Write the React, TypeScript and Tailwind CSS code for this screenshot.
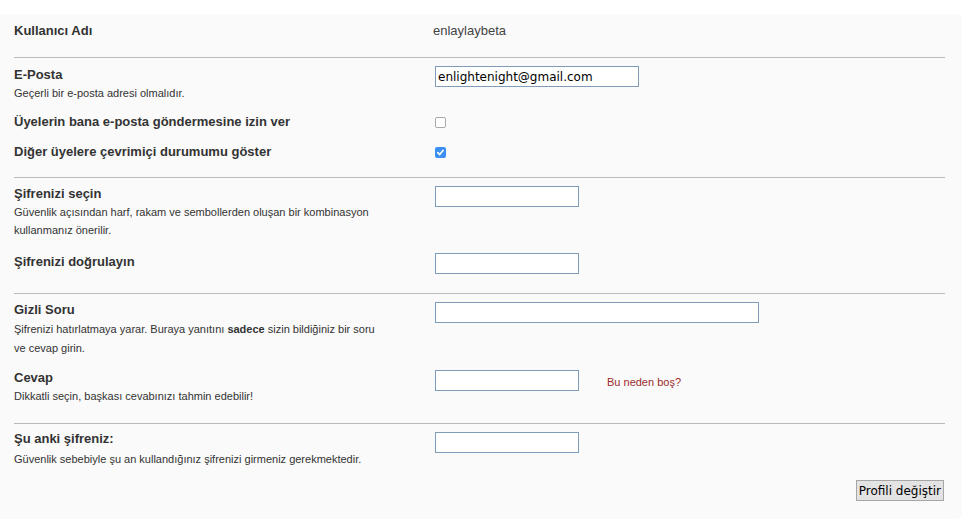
import React from "react";

const labelCls = "pt-[1px] font-['Liberation_Sans',Arial,sans-serif] text-[13px] leading-[18px] font-bold text-[#333]";
const descCls = "font-['Liberation_Sans',Arial,sans-serif] text-[11px] leading-[18px] text-[#333] max-w-[365px]";
const inputCls =
  "h-[21px] border border-[#7f9db9] bg-white px-[2px] font-['DejaVu_Sans',Verdana,sans-serif] text-[12px] text-black outline-none";

function Rule({ mt }: { mt: string }) {
  return <div className={`${mt} h-px bg-[#bbbbbb]`} />;
}

function CheckBox({ checked }: { checked: boolean }) {
  return checked ? (
    <span className="mt-[5px] flex size-[11px] items-center justify-center rounded-[2px] bg-[#3b8ff5]">
      <svg viewBox="0 0 10 10" className="size-[9px]" fill="none" stroke="white" strokeWidth="1.8">
        <path d="M2 5.2 4.1 7.3 8 2.6" strokeLinecap="round" strokeLinejoin="round" />
      </svg>
    </span>
  ) : (
    <span className="mt-[5px] block size-[11px] rounded-[2px] border border-[#a9a9a9] bg-white" />
  );
}

export default function App() {
  return (
    <div className="min-h-screen bg-white pt-[14px]">
      <div className="h-[505px] w-[962px] rounded-r-[6px] bg-[#fafafa] pl-[14px] pr-[17px] pt-[7px]">
        {/* username */}
        <div className="flex">
          <div className={`w-[419px] ${labelCls}`}>Kullanıcı Adı</div>
          <div className="pt-[1px] font-['Liberation_Sans',Arial,sans-serif] text-[13px] leading-[18px] text-[#444]">enlaylaybeta</div>
        </div>

        <Rule mt="mt-[17px]" />

        <div className="mt-[7px] flex">
          <div className="w-[421px]">
            <div className={labelCls}>E-Posta</div>
            <div className={descCls}>Geçerli bir e-posta adresi olmalıdır.</div>
          </div>
          <input className={`mt-[1px] w-[204px] ${inputCls}`} defaultValue="enlightenight@gmail.com" />
        </div>

        <div className="mt-[10px] flex">
          <div className={`w-[421px] ${labelCls}`}>Üyelerin bana e-posta göndermesine izin ver</div>
          <CheckBox checked={false} />
        </div>

        <div className="mt-[11px] flex">
          <div className={`w-[421px] ${labelCls}`}>Diğer üyelere çevrimiçi durumumu göster</div>
          <CheckBox checked />
        </div>

        <Rule mt="mt-[16px]" />

        <div className="mt-[6px] flex">
          <div className="w-[421px]">
            <div className={labelCls}>Şifrenizi seçin</div>
            <div className={descCls}>
              Güvenlik açısından harf, rakam ve sembollerden oluşan bir kombinasyon kullanmanız önerilir.
            </div>
          </div>
          <input type="password" className={`mt-[2px] w-[144px] ${inputCls}`} />
        </div>

        <div className="mt-[13px] flex">
          <div className={`w-[421px] ${labelCls}`}>Şifrenizi doğrulayın</div>
          <input type="password" className={`mt-[1px] w-[144px] ${inputCls}`} />
        </div>

        <Rule mt="mt-[19px]" />

        <div className="mt-[6px] flex">
          <div className="w-[421px]">
            <div className={labelCls}>Gizli Soru</div>
            <div className={`${descCls} mt-[1px] leading-[19px]`}>
              Şifrenizi hatırlatmaya yarar. Buraya yanıtını <span className="font-bold">sadece</span> sizin bildiğiniz bir soru ve cevap girin.
            </div>
          </div>
          <input className={`mt-[2px] w-[324px] ${inputCls}`} />
        </div>

        <div className="mt-[10px] flex">
          <div className="w-[421px]">
            <div className={labelCls}>Cevap</div>
            <div className={descCls}>Dikkatli seçin, başkası cevabınızı tahmin edebilir!</div>
          </div>
          <input className={`mt-[2px] w-[144px] ${inputCls}`} />
          <span className="ml-[28px] mt-[5px] font-['Liberation_Sans',Arial,sans-serif] text-[11px] leading-[18px] text-[#9b2b2b]">
            Bu neden boş?
          </span>
        </div>

        <Rule mt="mt-[18px]" />

        <div className="mt-[5px] flex">
          <div className="w-[421px]">
            <div className={labelCls}>Şu anki şifreniz:</div>
            <div className={`${descCls} mt-[2px]`}>
              Güvenlik sebebiyle şu an kullandığınız şifrenizi girmeniz gerekmektedir.
            </div>
          </div>
          <input type="password" className={`mt-[3px] w-[144px] ${inputCls}`} />
        </div>

        <div className="mt-[12px] flex justify-end pr-px">
          <button className="h-[21px] border border-[#a6a6a6] bg-[#e3e3e3] px-[2px] font-['DejaVu_Sans',Verdana,sans-serif] text-[12px] leading-[18px] text-black">
            Profili değiştir
          </button>
        </div>
      </div>
    </div>
  );
}
